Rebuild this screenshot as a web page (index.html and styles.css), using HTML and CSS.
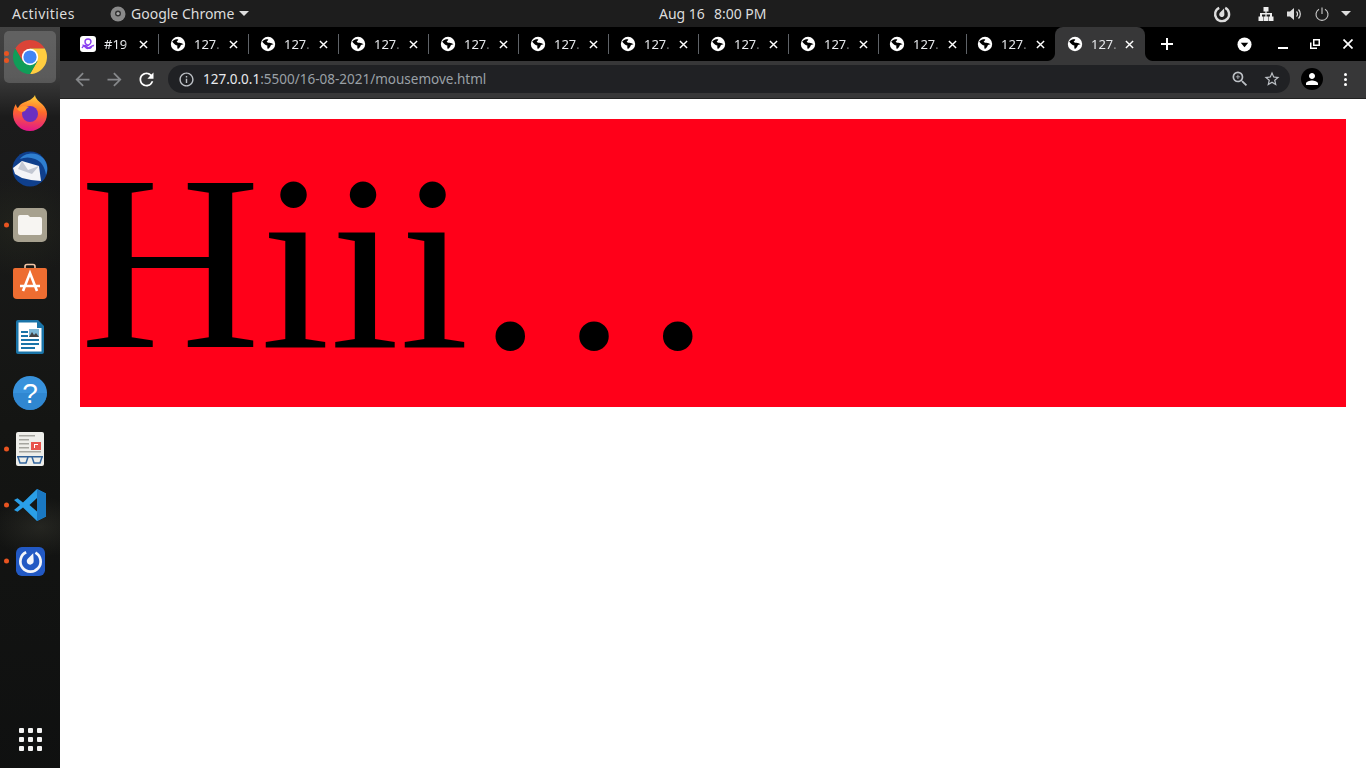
FILE: index.html
```html
<!DOCTYPE html>
<html lang="en">
<head>
<meta charset="utf-8">
<title>mousemove</title>
<link rel="stylesheet" href="styles.css">
</head>
<body>
<svg class="defs" width="0" height="0" aria-hidden="true">
  <symbol id="globe" viewBox="0 0 16 16"><circle cx="8" cy="8" r="7.200" fill="#fff"/><path fill="#000" d="M2.200 5.600C4 3.600 6.200 3.200 8.300 3.400 8 4.600 7.200 5 6.600 5.400 7 6.400 8 6.600 9.400 6.700 11 6.800 12.400 7.400 13.600 8.600 12 8.600 10.800 9 10.400 10.200 10 11.400 9 12.400 7.800 13 7.200 11.800 7.200 10.600 7.400 9.600 5.600 9.400 3.600 8 2.200 5.600z"/></symbol>
  <symbol id="close" viewBox="0 0 10 10"><path stroke="#fff" stroke-width="1.600" d="M1 1l8 8M9 1l-8 8"/></symbol>
</svg>

<header class="topbar">
  <div class="top-left">
    <span class="activities">Activities</span>
    <span class="app-menu">
      <svg class="app-icon" viewBox="0 0 16 16"><circle cx="8" cy="8" r="7.500" fill="#8a8a8a"/><circle cx="8" cy="7.500" r="3" fill="#333"/><circle cx="8" cy="7.500" r="1.600" fill="#aaa"/></svg>
      Google Chrome
      <i class="caret"></i>
    </span>
  </div>
  <div class="clock"><span>Aug 16</span><span>8:00 PM</span></div>
  <div class="tray">
    <svg class="tray-matter" viewBox="0 0 18 18"><path fill="none" stroke="#ddd" stroke-width="2.400" d="M6.200 2.800a7 7 0 1 0 6 .1"/><path fill="#ddd" d="M11 3.600l.4 5.600a2.600 2.600 0 1 1-4.600-1.400z"/></svg>
    <svg class="tray-net" viewBox="0 0 16 14"><path fill="#eee" d="M5.500 0h5v4.500H8.600V6H14v3.500h1.500V14h-5V9.500h1.500V7.500H8.600v2H10V14H6V9.500h1.400v-2H4v2h1.500V14h-5V9.500H2V6h5.400V4.500H5.500z"/></svg>
    <svg class="tray-vol" viewBox="0 0 16 14"><path fill="#ddd" d="M0 4.500h3L7 1v12L3 9.500H0z"/><path fill="none" stroke="#ddd" stroke-width="1.200" d="M9.500 4.500a3.500 3.500 0 0 1 0 5M11.500 2.500a6.500 6.500 0 0 1 0 9"/></svg>
    <svg class="tray-power" viewBox="0 0 14 14"><path fill="none" stroke="#ccc" stroke-width="1.100" d="M4 2.200a6 6 0 1 0 6 0M7 .5v6.500"/></svg>
    <i class="caret tray-caret"></i>
  </div>
</header>

<div class="desktop">
  <nav class="dock">
    <div class="dock-item active"><i class="pips"><b></b><b></b></i>
      <svg width="34" height="34" viewBox="0 0 34 34"><path fill="#db4437" d="M2.280 8.500A17 17 0 0 1 31.720 8.500H17L9.640 21.250z"/><path fill="#ffcd40" transform="rotate(120 17 17)" d="M2.280 8.500A17 17 0 0 1 31.720 8.500H17L9.640 21.250z"/><path fill="#0f9d58" transform="rotate(240 17 17)" d="M2.280 8.500A17 17 0 0 1 31.720 8.500H17L9.640 21.250z"/><circle cx="17" cy="17" r="8.200" fill="#fff"/><circle cx="17" cy="17" r="6.600" fill="#4285f4"/></svg>
    </div>
    <div class="dock-item">
      <svg width="34" height="36" viewBox="0 0 34 36"><defs><linearGradient id="ff" x1=".6" y1="0" x2=".5" y2="1"><stop offset="0" stop-color="#ffd43a"/><stop offset=".45" stop-color="#ff6a2a"/><stop offset="1" stop-color="#e3168a"/></linearGradient></defs><path fill="url(#ff)" d="M22 0c.5 4 4 6 7 9 3 3 5 6 5 10 0 9-7.600 17-17 17S0 28.500 0 19c0-4 1-7 3-10 0 2 1 3.500 2 4 1-3 4-5 7-6 4-1.500 8-3 10-7z"/><circle cx="17" cy="19" r="8" fill="#6a2fc0"/><path fill="#ff9a2e" d="M4 14c3-3 7-4 12-2-2 1-3 2-4 4l-3 1c-2-.5-4-1.500-5-3z"/></svg>
    </div>
    <div class="dock-item">
      <svg width="36" height="36" viewBox="0 0 36 36"><circle cx="18" cy="18" r="17.500" fill="#0f3f8c"/><path fill="#2f7fd0" d="M8 8C12 2 24 0 31 7c5 5 5 13 3 17-1-8-5-14-11-16-5-2-10-2-15 0z"/><path fill="#f4f4f7" d="M1 17l9-7 17 5 2 15-10-1-9-2-7-4z"/><path fill="#c3c7d2" d="M10 10l6 9 11-4-7 8-14-5z"/></svg>
    </div>
    <div class="dock-item"><i class="pips"><b></b></i>
      <svg width="34" height="34" viewBox="0 0 34 34"><rect width="34" height="34" rx="5" fill="#a7a18f"/><path fill="#f7f5f2" d="M5 9a2 2 0 0 1 2-2h8l2 2h10a2 2 0 0 1 2 2v14a2 2 0 0 1-2 2H7a2 2 0 0 1-2-2z"/></svg>
    </div>
    <div class="dock-item">
      <svg width="34" height="36" viewBox="0 0 34 36"><path fill="none" stroke="#f2c5a6" stroke-width="1.600" d="M12 5V3.500a2 2 0 0 1 2-2h6a2 2 0 0 1 2 2V5"/><path fill="#ee6d31" d="M0 7a2 2 0 0 1 2-2h30a2 2 0 0 1 2 2v25a4 4 0 0 1-4 4H4a4 4 0 0 1-4-4z"/><path fill="none" stroke="#fff" stroke-width="2.600" d="M10 28L17 10l7 18M7 23h20"/></svg>
    </div>
    <div class="dock-item">
      <svg width="28" height="34" viewBox="0 0 28 34"><path fill="#1a74a8" d="M2 0h20l6 6v26a2 2 0 0 1-2 2H2a2 2 0 0 1-2-2V2a2 2 0 0 1 2-2z"/><path fill="#fff" d="M2.500 2.500H21V8h4.500v23.500h-23z"/><path fill="#1a74a8" d="M5 11h7v2H5zM5 15h7v2H5zM5 19h18v2H5zM5 23h18v2H5zM5 27h14v2H5z"/><rect x="13" y="9" width="10" height="8" fill="#7fb8d6"/><path fill="#444" d="M13 17l3-5 2 3 2-2 3 4z"/></svg>
    </div>
    <div class="dock-item">
      <svg width="34" height="34" viewBox="0 0 34 34"><circle cx="17" cy="17" r="17" fill="#3892dc"/><path fill="#2b80c9" d="M0 17a17 17 0 0 0 34 0z" opacity=".6"/><text class="help-mark" x="17" y="26.500" text-anchor="middle">?</text></svg>
    </div>
    <div class="dock-item"><i class="pips"><b></b></i>
      <svg width="28" height="34" viewBox="0 0 28 34"><rect width="28" height="34" rx="2" fill="#eeeeea"/><path fill="#a5a59f" d="M3 3h16v1.500H3zM3 7h10v1.500H3zM3 11h10v1.500H3zM3 15h10v1.500H3zM3 19h22v1.500H3z"/><rect x="15" y="10" width="10" height="8" fill="#e8534c"/><path fill="#fff" d="M18 12h4v1h-3v3h-1z"/><path fill="#2f5f96" d="M1 24h26v1.500H1z"/><path fill="none" stroke="#35679f" stroke-width="1.500" d="M2 25l2 6h6l2-6M16 25l2 6h6l2-6"/></svg>
    </div>
    <div class="dock-item"><i class="pips"><b></b></i>
      <svg width="32" height="32" viewBox="0 0 32 32"><path fill="#2a9fe8" d="M23 0l9 4.500v23L23 32 9 18.500l-5.500 4.300L0 21l6-5-6-5 3.500-1.800L9 13.500z"/><path fill="#1a78c2" d="M23 0v32l9-4.500v-23z"/><path fill="#161616" d="M23 9l-7.500 7 7.500 6.500z"/></svg>
    </div>
    <div class="dock-item"><i class="pips"><b></b></i>
      <svg width="29" height="29" viewBox="0 0 30 30"><rect width="30" height="30" rx="6" fill="#2259c4"/><path fill="none" stroke="#f4f6fb" stroke-width="2.800" d="M10.500 5.500a10.500 10.500 0 1 0 9.600.3"/><path fill="#f4f6fb" d="M17.800 6.500l.5 7.800a3.600 3.600 0 1 1-6.400-1.900z"/></svg>
    </div>
    <div class="apps-grid"><b></b><b></b><b></b><b></b><b></b><b></b><b></b><b></b><b></b></div>
  </nav>

  <section class="browser">
    <div class="tabstrip">
      <div class="tabs">
        <div class="tab">
          <svg class="favicon" viewBox="0 0 16 16"><rect width="16" height="16" rx="3" fill="#fff"/><path fill="none" stroke="#8a3ff0" stroke-width="1.400" d="M5 6a3 3 0 0 1 6 0c0 2-3 3.500-3 3.500S5 8 5 6zM2 12c1.500-3 3-3 4.500-1.500S10 13 11 11.500s2-2.500 3-2M2.500 9c2 0 3 3.500 5 3.500s4-3.500 6-2.500"/></svg>
          <span class="tab-title">#19</span>
          <svg class="tab-close"><use href="#close"/></svg>
        </div>
        <div class="tab"><svg class="favicon"><use href="#globe"/></svg><span class="tab-title">127.</span><svg class="tab-close"><use href="#close"/></svg></div>
        <div class="tab"><svg class="favicon"><use href="#globe"/></svg><span class="tab-title">127.</span><svg class="tab-close"><use href="#close"/></svg></div>
        <div class="tab"><svg class="favicon"><use href="#globe"/></svg><span class="tab-title">127.</span><svg class="tab-close"><use href="#close"/></svg></div>
        <div class="tab"><svg class="favicon"><use href="#globe"/></svg><span class="tab-title">127.</span><svg class="tab-close"><use href="#close"/></svg></div>
        <div class="tab"><svg class="favicon"><use href="#globe"/></svg><span class="tab-title">127.</span><svg class="tab-close"><use href="#close"/></svg></div>
        <div class="tab"><svg class="favicon"><use href="#globe"/></svg><span class="tab-title">127.</span><svg class="tab-close"><use href="#close"/></svg></div>
        <div class="tab"><svg class="favicon"><use href="#globe"/></svg><span class="tab-title">127.</span><svg class="tab-close"><use href="#close"/></svg></div>
        <div class="tab"><svg class="favicon"><use href="#globe"/></svg><span class="tab-title">127.</span><svg class="tab-close"><use href="#close"/></svg></div>
        <div class="tab narrow"><svg class="favicon"><use href="#globe"/></svg><span class="tab-title">127.</span><svg class="tab-close"><use href="#close"/></svg></div>
        <div class="tab narrow no-sep"><svg class="favicon"><use href="#globe"/></svg><span class="tab-title">127.</span><svg class="tab-close"><use href="#close"/></svg></div>
        <div class="tab active"><svg class="favicon"><use href="#globe"/></svg><span class="tab-title">127.</span><svg class="tab-close"><use href="#close"/></svg></div>
      </div>
      <svg class="new-tab" viewBox="0 0 12 12"><path stroke="#fff" stroke-width="2" d="M6 0v12M0 6h12"/></svg>
      <div class="win-controls">
        <svg class="tab-search" viewBox="0 0 16 16"><circle cx="8" cy="8" r="7.500" fill="#fff"/><path fill="#000" d="M4 6.200h8L8 11z"/></svg>
        <svg class="win-min" viewBox="0 0 10 10"><path stroke="#fff" stroke-width="2" d="M0 9h10"/></svg>
        <svg class="win-restore" viewBox="0 0 10 10"><path fill="none" stroke="#fff" stroke-width="1.500" d="M3.750.75h5.500v5.500h-5.500zM.75 3.500v5.750H7"/></svg>
        <svg class="win-close" viewBox="0 0 10 10"><path stroke="#fff" stroke-width="1.700" d="M.5.5l9 9M9.500.5l-9 9"/></svg>
      </div>
    </div>

    <div class="toolbar">
      <svg class="nav-btn" viewBox="0 0 24 24"><path fill="#86888b" d="M20 11H7.830l5.590-5.590L12 4l-8 8 8 8 1.410-1.410L7.830 13H20z"/></svg>
      <svg class="nav-btn" viewBox="0 0 24 24"><path fill="#86888b" d="M4 11h12.170l-5.590-5.590L12 4l8 8-8 8-1.410-1.410L16.170 13H4z"/></svg>
      <svg class="nav-btn" viewBox="0 0 24 24"><path fill="#fff" d="M17.650 6.350A7.958 7.958 0 0 0 12 4c-4.420 0-7.990 3.580-7.990 8s3.570 8 7.990 8c3.730 0 6.840-2.550 7.730-6h-2.080A5.990 5.990 0 0 1 12 18c-3.310 0-6-2.690-6-6s2.690-6 6-6c1.660 0 3.140.69 4.220 1.780L13 11h7V4z"/></svg>
      <div class="omnibox">
        <svg class="info" viewBox="0 0 24 24"><path fill="#bdc1c6" d="M11 7h2v2h-2zm0 4h2v6h-2zm1-9C6.480 2 2 6.480 2 12s4.480 10 10 10 10-4.480 10-10S17.520 2 12 2zm0 18c-4.410 0-8-3.590-8-8s3.590-8 8-8 8 3.590 8 8-3.590 8-8 8z"/></svg>
        <span class="url"><b>127.0.0.1</b>:5500/16-08-2021/mousemove.html</span>
        <svg class="omni-zoom" viewBox="0 0 24 24"><path fill="#bdc1c6" d="M15.500 14h-.79l-.28-.27A6.470 6.470 0 0 0 16 9.500 6.500 6.500 0 1 0 9.500 16c1.610 0 3.090-.59 4.230-1.570l.27.28v.79l5 4.990L20.490 19l-4.990-5zm-6 0C7.010 14 5 11.990 5 9.500S7.010 5 9.500 5 14 7.010 14 9.500 11.990 14 9.500 14z"/><path fill="#bdc1c6" d="M12 10h-2v2H9v-2H7V9h2V7h1v2h2v1z"/></svg>
        <svg class="omni-star" viewBox="0 0 24 24"><path fill="#bdc1c6" d="M22 9.240l-7.190-.62L12 2 9.190 8.630 2 9.240l5.460 4.730L5.820 21 12 17.270 18.180 21l-1.630-7.030L22 9.240zM12 15.400l-3.760 2.270 1-4.280-3.320-2.880 4.380-.38L12 6.100l1.710 4.040 4.380.38-3.320 2.880 1 4.280L12 15.400z"/></svg>
      </div>
      <span class="avatar"><svg viewBox="0 0 24 24"><path fill="#fff" d="M12 12c2.210 0 4-1.790 4-4s-1.790-4-4-4-4 1.790-4 4 1.790 4 4 4zm0 2c-2.670 0-8 1.340-8 4v2h16v-2c0-2.660-5.330-4-8-4z"/></svg></span>
      <span class="kebab"><b></b><b></b><b></b></span>
    </div>

    <main class="page">
      <h1 class="hello">Hiii…</h1>
    </main>
  </section>
</div>
</body>
</html>
```
FILE: styles.css
```css
* { box-sizing: border-box; }
html, body { margin: 0; height: 100%; }
body {
  width: 1366px;
  height: 768px;
  overflow: hidden;
  display: flex;
  flex-direction: column;
  font-family: "Noto Sans", "Open Sans", sans-serif;
  background: #111;
}
.defs { position: absolute; }

/* GNOME top bar */
.topbar {
  height: 27px;
  flex: none;
  display: grid;
  grid-template-columns: 659px auto 1fr;
  align-items: center;
  background: #1d1d1d;
  color: #dcdcdc;
  font-size: 14px;
}
.top-left { display: flex; align-items: center; padding-left: 12px; }
.activities { width: 98px; letter-spacing: .45px; }
.app-menu { display: flex; align-items: center; }
.app-icon { width: 16px; height: 16px; margin-right: 5px; }
.caret {
  display: inline-block;
  width: 0; height: 0;
  border-left: 5px solid transparent;
  border-right: 5px solid transparent;
  border-top: 5px solid #ddd;
  margin-left: 5px;
}
.clock { display: flex; gap: 9px; font-size: 14px; }
.tray { display: flex; align-items: center; justify-content: flex-end; padding-right: 15px; }
.tray-matter { width: 18px; height: 18px; margin-right: 27px; }
.tray-net { width: 16px; height: 14px; margin-right: 13px; }
.tray-vol { width: 16px; height: 14px; margin-right: 12px; }
.tray-power { width: 14px; height: 14px; margin-right: 12px; }
.tray-caret { margin-left: 0; }

.desktop { flex: 1; display: flex; min-height: 0; }

/* Ubuntu dock */
.dock {
  width: 60px;
  flex: none;
  display: flex;
  flex-direction: column;
  align-items: center;
  padding-top: 2px;
  background:
    radial-gradient(ellipse 50px 30px at 40px 500px, rgba(70,70,60,.35), transparent),
    radial-gradient(ellipse 60px 50px at 20px 200px, rgba(60,66,40,.22), transparent),
    linear-gradient(180deg, #434343 0, #3a3a3a 50px, #1b1b1b 90px, #141513 400px, #0f1010 768px);
  position: relative;
}
.dock-item {
  position: relative;
  width: 52px;
  height: 52px;
  margin: 2px 0;
  flex: none;
  display: flex;
  align-items: center;
  justify-content: center;
  border-radius: 5px;
}
.dock-item.active { background: rgba(255,255,255,.17); }
.pips {
  position: absolute;
  left: -.5px;
  top: 50%;
  transform: translateY(-50%);
  display: flex;
  flex-direction: column;
  gap: 2px;
}
.pips b { width: 5px; height: 5px; border-radius: 50%; background: #e95420; display: block; }
.help-mark { font: 28px "Liberation Sans", sans-serif; fill: #fff; }
.apps-grid {
  position: absolute;
  left: 19px;
  top: 701px;
  display: grid;
  grid-template-columns: repeat(3, 5px);
  gap: 4px;
}
.apps-grid b { width: 5px; height: 5px; background: #f4f4f4; border-radius: 1px; display: block; }

/* Browser */
.browser { flex: 1; display: flex; flex-direction: column; min-width: 0; }
.tabstrip {
  height: 34px;
  flex: none;
  display: flex;
  align-items: stretch;
  background: #000;
  padding-left: 9px;
}
.tabs { width: 1076px; flex: none; display: flex; }
.tab {
  width: 90px;
  flex: none;
  position: relative;
  display: flex;
  align-items: center;
  padding-left: 11px;
  color: #e8eaed;
  font-size: 13px;
}
.tab.narrow { width: 88px; padding-left: 10px; }
.tab::before {
  content: "";
  position: absolute;
  right: 0;
  top: 7px;
  height: 20px;
  width: 1px;
  background: #5f6368;
}
.tab.no-sep::before { display: none; }
.tab.active { background: #373738; border-radius: 8px 8px 0 0; padding-left: 12px; }
.tab.active::before, .tab.active::after {
  content: "";
  display: block;
  position: absolute;
  top: auto;
  bottom: 0;
  width: 8px;
  height: 8px;
  background: radial-gradient(circle at 0 0, #000 7.5px, #373738 8.5px);
}
.tab.active::before { right: 100%; }
.tab.active::after {
  left: 100%;
  background: radial-gradient(circle at 100% 0, #000 7.5px, #373738 8.5px);
}
.favicon { width: 16px; height: 16px; flex: none; }
.tab-title {
  width: 30px;
  margin-left: 8px;
  white-space: nowrap;
  -webkit-mask-image: linear-gradient(90deg, #000 68%, rgba(0,0,0,.15) 88%);
  mask-image: linear-gradient(90deg, #000 68%, rgba(0,0,0,.15) 88%);
}
.tab-close { width: 9px; height: 9px; margin-left: 5px; flex: none; }
.tab.active .tab-close { margin-left: 4px; }

.new-tab { width: 12px; height: 12px; align-self: center; margin-left: 16px; }
.win-controls { margin-left: auto; display: flex; align-items: center; padding-right: 13px; }
.tab-search { width: 15px; height: 15px; margin-right: 26px; }
.win-min { width: 10px; height: 10px; margin-right: 22px; }
.win-restore { width: 10px; height: 10px; margin-right: 23px; }
.win-close { width: 10px; height: 10px; }

.toolbar {
  height: 38px;
  flex: none;
  display: flex;
  align-items: center;
  padding: 0 0 1px 12px;
  background: #373738;
  border-bottom: 1px solid #222;
}
.nav-btn { width: 21px; height: 21px; margin-right: 11px; flex: none; }
.omnibox {
  width: 1122px;
  height: 28px;
  flex: none;
  display: flex;
  align-items: center;
  padding-left: 10px;
  border-radius: 14px;
  background: #202124;
  color: #9aa0a6;
}
.info { width: 17px; height: 17px; flex: none; }
.url { margin-left: 8px; white-space: nowrap; font-size: 13.5px; }
.url b { color: #e8eaed; font-weight: 400; }
.omni-zoom { width: 20px; height: 20px; margin-left: auto; margin-right: 13px; }
.omni-star { width: 18px; height: 18px; margin-right: 9px; }
.avatar {
  width: 22px; height: 22px;
  margin-left: 11px;
  border-radius: 50%;
  background: #000;
  display: flex;
  align-items: center;
  justify-content: center;
  flex: none;
}
.avatar svg { width: 18px; height: 18px; }
.kebab { display: flex; flex-direction: column; gap: 2px; margin-left: 21px; flex: none; }
.kebab b { width: 3px; height: 3px; border-radius: 50%; background: #fff; display: block; }

/* Page */
.page { flex: 1; background: #fff; padding: 20px; min-height: 0; }
.hello {
  margin: 0;
  background: #ff0019;
  color: #000;
  font: 400 250px "Liberation Serif", "Times New Roman", serif;
}
```
